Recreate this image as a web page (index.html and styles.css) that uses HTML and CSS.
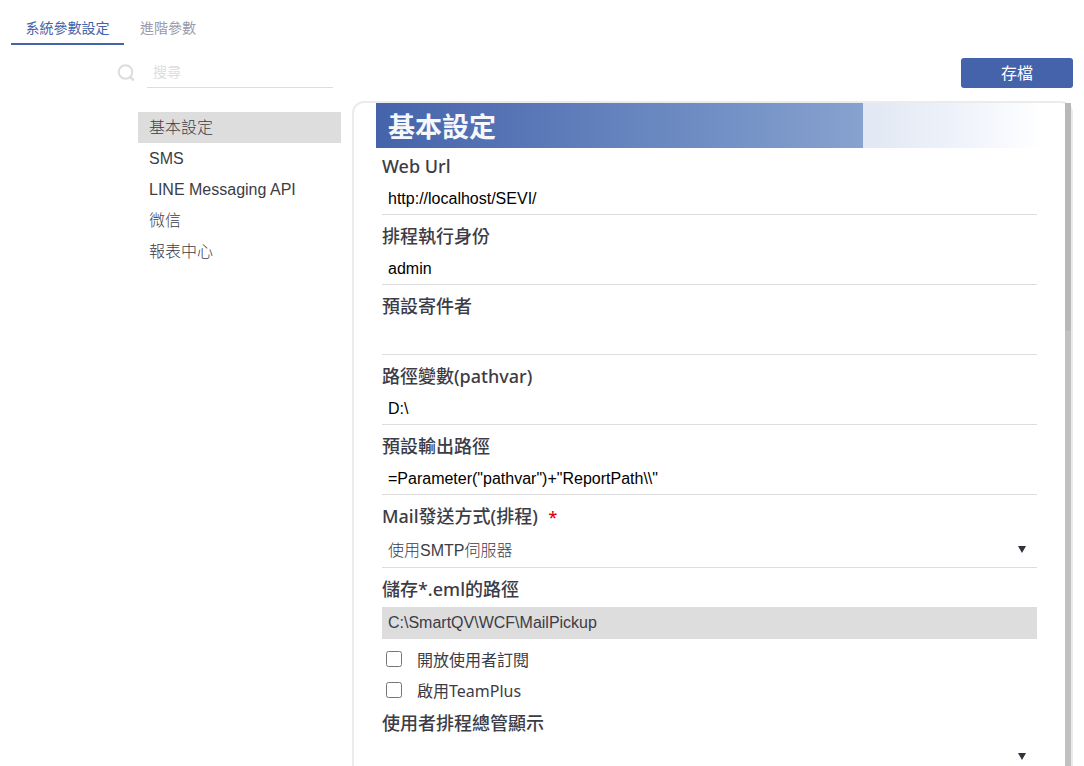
FILE: index.html
```html
<!doctype html>
<html lang="zh-Hant">
<head>
	<meta charset="utf-8" />
	<title>系統參數設定</title>
	<link rel="stylesheet" href="styles.css">
</head>

<body>
	<nav class="tabs">
		<a class="tab active" href="#system">系統參數設定</a>
		<a class="tab" href="#advanced">進階參數</a>
	</nav>

	<div class="toolbar">
		<label class="search">
			<svg width="18" height="18" viewBox="0 0 18 18" fill="none" stroke="#ddd" stroke-width="2">
				<circle cx="8.5" cy="8" r="6.8" />
				<path d="M13.2 12.8l3.5 3.5" stroke-width="2.6" />
			</svg>
			<input type="text" placeholder="搜尋" aria-label="搜尋">
		</label>
		<button class="save" type="button">存檔</button>
	</div>

	<div class="content">
		<ul class="menu">
			<li><a class="active" href="#basic">基本設定</a></li>
			<li><a href="#sms">SMS</a></li>
			<li><a href="#line">LINE Messaging API</a></li>
			<li><a href="#wechat">微信</a></li>
			<li><a href="#report">報表中心</a></li>
		</ul>

		<main class="panel">
			<form class="settings">
				<h1 id="basic">基本設定</h1>

				<div class="field">
					<label for="weburl">Web Url</label>
					<input id="weburl" type="text" value="http://localhost/SEVI/">
				</div>
				<div class="field">
					<label for="runas">排程執行身份</label>
					<input id="runas" type="text" value="admin">
				</div>
				<div class="field">
					<label for="sender">預設寄件者</label>
					<input id="sender" type="text" value="">
				</div>
				<div class="field">
					<label for="pathvar">路徑變數(pathvar)</label>
					<input id="pathvar" type="text" value="D:\">
				</div>
				<div class="field">
					<label for="output">預設輸出路徑</label>
					<input id="output" type="text" value="=Parameter(&quot;pathvar&quot;)+&quot;ReportPath\\&quot;">
				</div>
				<div class="field">
					<label for="mail">Mail發送方式(排程) <span class="required">*</span></label>
					<div class="select">
						<select id="mail">
							<option>使用SMTP伺服器</option>
						</select>
					</div>
				</div>
				<div class="field">
					<label for="eml">儲存*.eml的路徑</label>
					<input id="eml" type="text" value="C:\SmartQV\WCF\MailPickup" disabled>
				</div>

				<div class="checks">
					<label><input type="checkbox"> 開放使用者訂閱</label>
					<label><input type="checkbox"> 啟用TeamPlus</label>
				</div>

				<div class="field">
					<label for="display">使用者排程總管顯示</label>
					<div class="select">
						<select id="display">
							<option></option>
						</select>
					</div>
				</div>
			</form>
			<div class="scrollbar"><div class="thumb"></div></div>
		</main>
	</div>
</body>
</html>
```
FILE: styles.css
```css
*, *::before, *::after {
	box-sizing: border-box;
}

body {
	display: flex;
	flex-direction: column;
	height: 100vh;
	margin: 0;
	padding: 0 11px;
	overflow: hidden;
	color: #3c3c46;
	background: #fff;
	font: 300 16px "Liberation Sans", "Noto Sans CJK TC", sans-serif;
}

input, select, button {
	margin: 0;
	font: inherit;
}

a {
	color: inherit;
	text-decoration: none;
}

/* tabs */
.tabs {
	display: flex;
	flex: none;
	height: 45px;
	font-size: 14px;
	font-weight: 400;
}

.tab {
	padding: 0 16px;
	line-height: 57px;
	color: #9a9aae;
}

.tab.active {
	width: 113px;
	padding: 0;
	text-align: center;
	color: #4563aa;
	border-bottom: 2px solid #4563aa;
}

/* search + save */
.toolbar {
	display: flex;
	flex: none;
	justify-content: space-between;
	height: 30px;
	margin: 13px 0;
}

.search {
	display: flex;
	align-items: center;
	gap: 12px;
	margin-left: 106px;
}

.search input {
	width: 186px;
	height: 30px;
	padding: 0 6px 2px;
	border: 0;
	border-bottom: 1px solid #ddd;
	outline: none;
	font-size: 14px;
	font-weight: 400;
}

.search input::placeholder {
	color: #ddd;
}

.save {
	width: 112px;
	padding: 0 0 2px;
	border: 0;
	border-radius: 3px;
	color: #fff;
	background: #4563aa;
	font-weight: 400;
}

.content {
	display: flex;
	flex: 1;
	gap: 11px;
	min-height: 0;
}

/* left menu */
.menu {
	flex: none;
	width: 203px;
	margin: 11px 0 0 127px;
	padding: 0;
	list-style: none;
}

.menu a {
	display: block;
	padding-left: 11px;
	line-height: 31px;
}

.menu .active {
	background: #ddd;
}

/* settings */
.panel {
	display: flex;
	flex: 1;
	min-width: 0;
	border: 2px solid #ebebeb;
	border-bottom: 0;
	border-radius: 12px 12px 0 0;
}

.settings {
	flex: 1;
	min-width: 0;
	padding: 0 22px;
	overflow: hidden;
}

.settings h1 {
	margin: 0;
	padding-left: 12px;
	color: #f5f7fb;
	font: bold 27px/45px "Noto Sans CJK TC", sans-serif;
	background: linear-gradient(to right, #4563aa, #7290c5 52%, #88a2cf 73%, #e1e8f3 73%, #ecf0f9 85%, #fff);
}

.field, .checks {
	margin: 0 6px 3px;
}

.field label {
	display: block;
	font: 500 18px/36px "Noto Sans", "Noto Sans CJK TC", sans-serif;
}

.field input, .field select {
	display: block;
	width: 100%;
	height: 31px;
	padding: 0 6px;
	border: 0;
	border-bottom: 1px solid #ddd;
	border-radius: 0;
	outline: none;
	color: #000;
	background: none;
}

.field input:disabled {
	height: 32px;
	color: #3c3c46;
	background: #ddd;
}

.required {
	margin-left: 6px;
	color: #e60000;
	font-size: 16px;
	line-height: 1;
}

.select {
	position: relative;
}

.field select {
	height: 34px;
	color: #3c3c46;
	appearance: none;
}

.select::after {
	content: "";
	position: absolute;
	top: 12px;
	right: 11px;
	border: 4px solid transparent;
	border-top: 7px solid #32323c;
	border-bottom: 0;
	pointer-events: none;
}

.checks {
	margin: 4px 6px 0;
}

.checks label {
	display: flex;
	align-items: center;
	gap: 15px;
	height: 31px;
	font: 400 16px "Noto Sans", "Noto Sans CJK TC", sans-serif;
}

.checks input {
	width: 16px;
	height: 16px;
	margin-left: 4px;
}

.scrollbar {
	flex: none;
	width: 6px;
	background: #c1c1c1;
}

.thumb {
	height: 228px;
	border-radius: 0 0 3px 3px;
	background: #b8b8b8;
}
```
